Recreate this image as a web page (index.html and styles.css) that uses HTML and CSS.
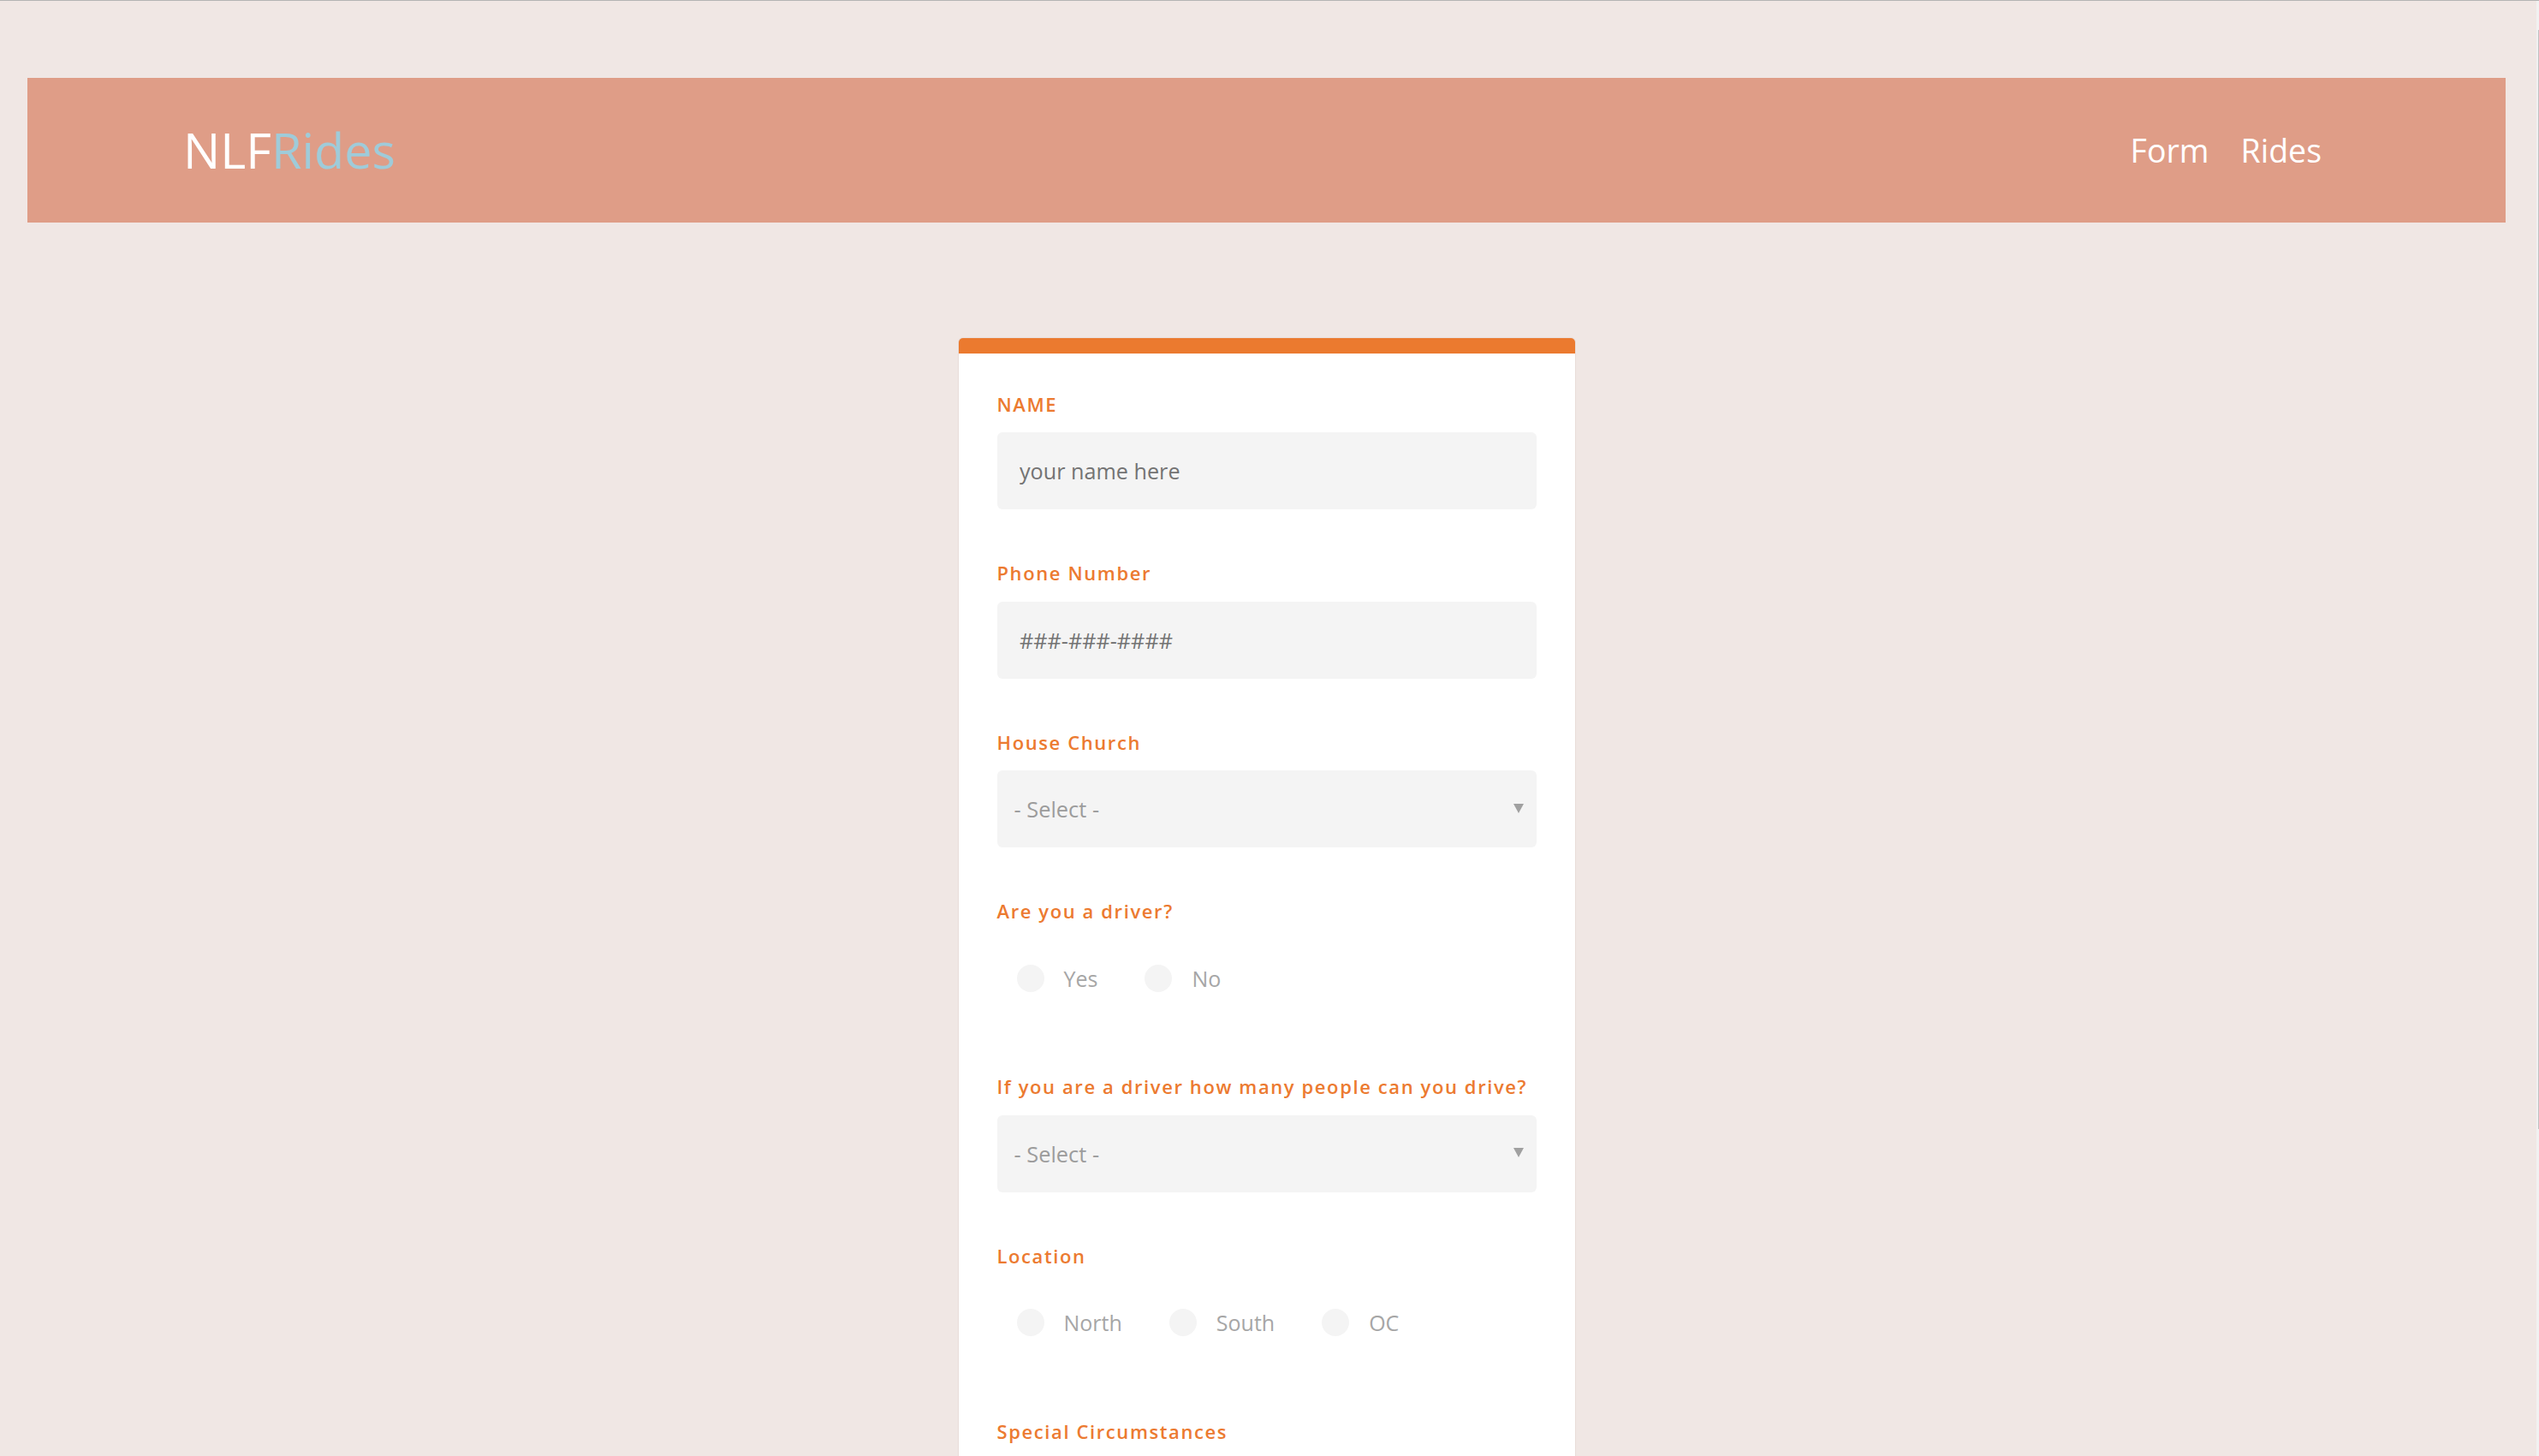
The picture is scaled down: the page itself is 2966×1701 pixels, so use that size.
FILE: index.html
```html
<!DOCTYPE html>
<html lang="en">
<head>
<meta charset="utf-8">
<title>NLFRides</title>
<link rel="stylesheet" href="styles.css">
</head>
<body>
<div class="page">
  <header class="topbar">
    <a class="logo" href="#"><span class="logo-nlf">NLF</span><span class="logo-rides">Rides</span></a>
    <nav class="nav">
      <a class="nav-link" href="#">Form</a>
      <a class="nav-link" href="#">Rides</a>
    </nav>
  </header>

  <main class="main">
    <form class="card">
      <div class="field">
        <label class="field-label" for="name">NAME</label>
        <input class="text-input" id="name" type="text" placeholder="your name here">
      </div>

      <div class="field">
        <label class="field-label" for="phone">Phone Number</label>
        <input class="text-input" id="phone" type="tel" placeholder="###-###-####">
      </div>

      <div class="field">
        <label class="field-label" for="church">House Church</label>
        <div class="select-wrap">
          <select class="select" id="church">
            <option>- Select -</option>
          </select>
          <svg class="select-arrow" width="12" height="11" viewBox="0 0 12 11"><path d="M0 0H12L6 11Z" fill="#a0a0a0"/></svg>
        </div>
      </div>

      <div class="field">
        <span class="field-label">Are you a driver?</span>
        <div class="radio-row">
          <label class="radio-option"><input class="radio" type="radio" name="driver"><span>Yes</span></label>
          <label class="radio-option"><input class="radio" type="radio" name="driver"><span>No</span></label>
        </div>
      </div>

      <div class="field">
        <label class="field-label" for="seats">If you are a driver how many people can you drive?</label>
        <div class="select-wrap">
          <select class="select" id="seats">
            <option>- Select -</option>
          </select>
          <svg class="select-arrow" width="12" height="11" viewBox="0 0 12 11"><path d="M0 0H12L6 11Z" fill="#a0a0a0"/></svg>
        </div>
      </div>

      <div class="field">
        <span class="field-label">Location</span>
        <div class="radio-row">
          <label class="radio-option"><input class="radio" type="radio" name="loc"><span>North</span></label>
          <label class="radio-option"><input class="radio" type="radio" name="loc"><span>South</span></label>
          <label class="radio-option"><input class="radio" type="radio" name="loc"><span>OC</span></label>
        </div>
      </div>

      <div class="field">
        <label class="field-label" for="special">Special Circumstances</label>
        <textarea class="text-area" id="special"></textarea>
      </div>

      <button class="submit" type="submit">Submit</button>
    </form>
  </main>
</div>
<div class="scrollbar"><div class="scrollbar-thumb"></div></div>
</body>
</html>
```

FILE: styles.css
```css
html {
  background: #f0e7e4;
}

body {
  margin: 0;
  border-top: 1px solid #b4b4b4;
  background: #f0e7e4;
  font-family: "Open Sans", "Liberation Sans", sans-serif;
}

.page {
  margin: 0 39px 0 32px;
}

.topbar {
  margin-top: 90px;
  height: 169px;
  background: #df9d87;
  display: flex;
  align-items: center;
  justify-content: space-between;
  padding: 0 215px 0 182px;
}

.logo {
  font-size: 57.5px;
  line-height: 1;
  text-decoration: none;
}

.logo-nlf {
  color: #ffffff;
}

.logo-rides {
  color: #9fcbd9;
}

.nav {
  display: flex;
  gap: 37px;
}

.nav-link {
  color: #ffffff;
  font-size: 37.5px;
  line-height: 1;
  text-decoration: none;
}

.main {
  display: flex;
  justify-content: center;
  padding-top: 135px;
  padding-bottom: 200px;
}

.card {
  width: 720px;
  box-sizing: border-box;
  background: #ffffff;
  border-top: 18px solid #eb7a2f;
  border-radius: 5px 5px 0 0;
  box-shadow: 0 0 0 1px rgba(180, 150, 140, 0.12);
  padding: 43.5px 45px 60px;
}

.field {
  margin-bottom: 59px;
}

.field-label {
  display: block;
  font-size: 22px;
  line-height: 30px;
  font-weight: 600;
  letter-spacing: 1.6px;
  color: #ec7a30;
  margin-bottom: 18.5px;
}

.text-input {
  display: block;
  width: 100%;
  box-sizing: border-box;
  height: 90px;
  border: 0;
  border-radius: 6px;
  background: #f4f4f4;
  padding: 0 26px 0 26.5px;
  font-family: inherit;
  font-size: 25.2px;
  color: #555555;
  outline: none;
}

.text-input::placeholder {
  color: #737373;
  opacity: 1;
}

.select-wrap {
  position: relative;
}

.select {
  display: block;
  width: 100%;
  box-sizing: border-box;
  height: 90px;
  border: 0;
  border-radius: 6px;
  background: #f4f4f4;
  padding: 0 19px 0 20px;
  font-family: inherit;
  font-size: 25.4px;
  color: #9c9c9c;
  appearance: none;
  -webkit-appearance: none;
  outline: none;
}

.select-arrow {
  position: absolute;
  right: 15px;
  top: 38.5px;
}

.radio-row {
  display: flex;
  padding: 29px 0 36.5px 23px;
}

.radio-option {
  display: flex;
  align-items: center;
  gap: 23px;
  margin-right: 55px;
  font-size: 25px;
  line-height: 32px;
  color: #a6a6a6;
}

.radio {
  appearance: none;
  -webkit-appearance: none;
  width: 32px;
  height: 32px;
  margin: 0;
  border-radius: 50%;
  background: #f4f4f4;
}

.text-area {
  display: block;
  width: 100%;
  box-sizing: border-box;
  height: 200px;
  border: 0;
  border-radius: 6px;
  background: #f4f4f4;
  resize: none;
}

.submit {
  border: 0;
  border-radius: 6px;
  background: #eb7a2f;
  color: #ffffff;
  font-family: inherit;
  font-size: 25px;
  padding: 20px 40px;
}

.scrollbar {
  position: fixed;
  top: 1px;
  right: 0;
  bottom: 0;
  width: 3px;
  background: #f1f1f1;
}

.scrollbar-thumb {
  margin: 34px 0 0 2px;
  width: 1px;
  height: 1284px;
  background: #c1c1c1;
}
```
